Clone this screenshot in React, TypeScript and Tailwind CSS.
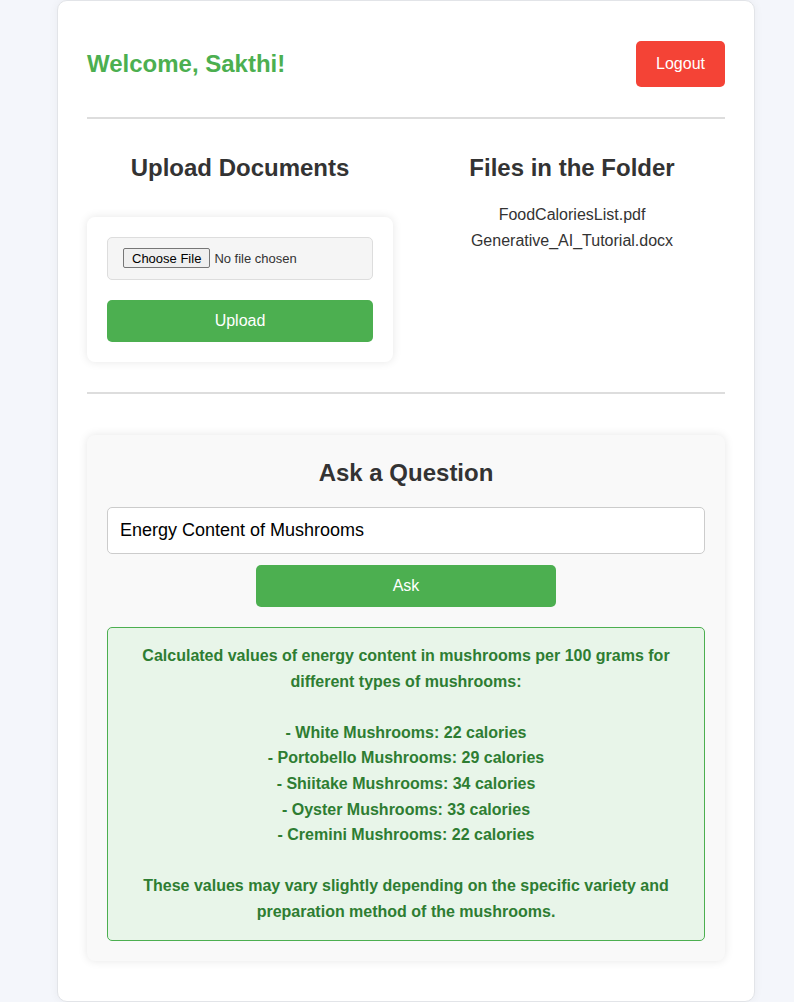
import React from 'react';

const files = ['FoodCaloriesList.pdf', 'Generative_AI_Tutorial.docx'];

const answer = `Calculated values of energy content in mushrooms per 100 grams for different types of mushrooms:

- White Mushrooms: 22 calories
- Portobello Mushrooms: 29 calories
- Shiitake Mushrooms: 34 calories
- Oyster Mushrooms: 33 calories
- Cremini Mushrooms: 22 calories

These values may vary slightly depending on the specific variety and preparation method of the mushrooms.`;

export default function App() {
  return (
    <div className="min-h-screen bg-[#f4f6fb] font-['Liberation_Sans',Arial,sans-serif]">
      <div className="ml-[57px] w-[698px] rounded-[10px] border border-[#e2e4e8] bg-white px-[29px] pb-[40px] pt-[40px] shadow-[0_0_10px_rgba(0,0,0,0.05)]">
        {/* header */}
        <div className="flex items-center justify-between">
          <h1 className="text-[24px] font-bold text-[#4caf50]">Welcome, Sakthi!</h1>
          <button className="h-[46px] w-[89px] rounded-[5px] bg-[#f44336] text-[16px] text-white">
            Logout
          </button>
        </div>

        <div className="mt-[30px] h-[2px] bg-[#dddddd]" />

        {/* upload + folder */}
        <div className="mt-[35px] flex gap-[26px]">
          <div className="w-[306px]">
            <h2 className="text-center text-[24px] font-bold leading-[28px] text-[#333]">Upload Documents</h2>
            <div className="mt-[35px] rounded-[8px] bg-white p-[20px] shadow-[0_0_10px_rgba(0,0,0,0.1)]">
              <div className="flex h-[43px] items-center rounded-[5px] border border-[#dddddd] bg-[#f5f5f5] px-[15px]">
                <input
                  type="file"
                  className="text-[13px] text-[#333] file:mr-[4px] file:h-[20px] file:rounded-[2px] file:border file:border-solid file:border-[#767676] file:bg-[#efefef] file:px-[8px] file:text-[13px] file:text-black"
                />
              </div>
              <button className="mt-[20px] h-[42px] w-full rounded-[5px] bg-[#4caf50] text-[16px] text-white">
                Upload
              </button>
            </div>
          </div>
          <div className="w-[306px]">
            <h2 className="text-center text-[24px] font-bold leading-[28px] text-[#333]">Files in the Folder</h2>
            <ul className="mt-[20px] text-center text-[16px] leading-[26px] text-[#333]">
              {files.map((f) => (
                <li key={f}>{f}</li>
              ))}
            </ul>
          </div>
        </div>

        <div className="mt-[30px] h-[2px] bg-[#dddddd]" />

        {/* ask */}
        <div className="mt-[41px] rounded-[8px] bg-[#f9f9f9] px-[20px] pb-[20px] pt-[24px] shadow-[0_0_10px_rgba(0,0,0,0.1)]">
          <h2 className="text-center text-[24px] font-bold leading-[28px] text-[#333]">Ask a Question</h2>
          <input
            type="text"
            defaultValue="Energy Content of Mushrooms"
            className="mt-[20px] h-[47px] w-full rounded-[5px] border border-[#cccccc] bg-white pl-[12px] text-[18px] text-black outline-none"
          />
          <button className="mx-auto mt-[11px] block h-[42px] w-[300px] rounded-[5px] bg-[#4caf50] text-[16px] text-white">
            Ask
          </button>
          <div className="mt-[20px] whitespace-pre-line rounded-[5px] border border-[#4caf50] bg-[#e8f5e9] p-[15px] text-center text-[16px] font-bold leading-[25.6px] text-[#2e7d32]">
            {answer}
          </div>
        </div>
      </div>
    </div>
  );
}
